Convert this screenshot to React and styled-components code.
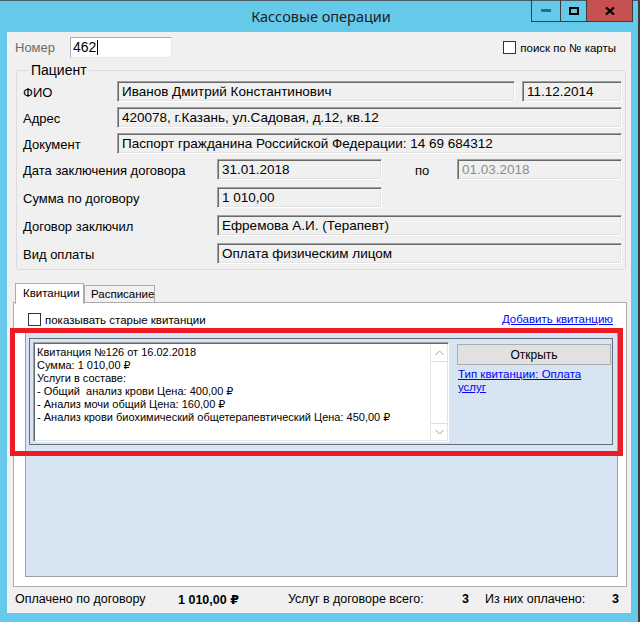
import React from 'react';
import styled, { createGlobalStyle } from 'styled-components';

const Global = createGlobalStyle`
  html, body { margin: 0; padding: 0; background: #fff; }
  body { font-family: "Liberation Sans", "DejaVu Sans", sans-serif; }
  * { box-sizing: border-box; }
`;

const Window = styled.div`
  position: relative;
  width: 640px;
  height: 622px;
  background: #65c9ea;
  border-top: 1px solid #4a5a60;
  border-right: 2px solid #3c3c3c;
  display: flex;
  flex-direction: column;
`;

const TitleBar = styled.div`
  height: 31px;
  display: grid;
  grid-template-columns: 1fr auto 1fr;
  align-items: start;
`;

const Title = styled.div`
  font-family: "Noto Sans", "Open Sans", sans-serif;
  font-size: 14.5px;
  color: #1e1e1e;
  line-height: 31px;
  padding-left: 4px;
`;

const Caption = styled.div`
  justify-self: end;
  margin-right: 5px;
  margin-top: -1px;
  display: flex;
  border: 1px solid #3c3c3c;
  border-top: none;
  height: 22px;
`;

const CapBtn = styled.div`
  width: ${p => p.$w}px;
  height: 100%;
  display: flex;
  align-items: center;
  justify-content: center;
  background: ${p => (p.$close ? '#c75050' : 'transparent')};
  border-left: ${p => (p.$first ? 'none' : '1px solid #3c3c3c')};
`;

const Body = styled.div`
  margin: 0 7px;
  height: 581px;
  background: #f0f0f0;
  display: flex;
  flex-direction: column;
  color: #000;
`;

const TopRow = styled.div`
  display: flex;
  align-items: center;
  padding: 5px 15px 0 8px;
  height: 26px;
`;

const GrayLabel = styled.span`
  width: 55px;
  font-size: 13px;
  color: #6d6d6d;
`;

const NumInput = styled.div`
  width: 102px;
  height: 21px;
  background: #fff;
  border: 1px solid #abadb3;
  border-right-color: #e3e9ef;
  border-bottom-color: #e3e9ef;
  font-size: 14px;
  line-height: 19px;
  padding-left: 2px;
  display: flex;
  align-items: center;
`;

const Caret = styled.span`
  width: 1px;
  height: 15px;
  background: #000;
  margin-left: 1px;
`;

const CheckRow = styled.label`
  display: flex;
  align-items: center;
  gap: 4px;
  font-size: 11.5px;
  margin-left: ${p => (p.$auto ? 'auto' : '0')};
`;

const Box = styled.span`
  width: 13px;
  height: 13px;
  background: #fff;
  border: 1px solid #333;
`;

const Group = styled.fieldset`
  margin: 4px 0 0 9px;
  width: 610px;
  padding: 3px 3px 5px 6px;
  border: 1px solid #dcdcdc;
  border-radius: 3px;
  min-width: 0;
`;

const Legend = styled.legend`
  font-size: 14px;
  line-height: 16px;
  padding: 0 2px;
  margin-left: 6px;
`;

const Row = styled.div`
  display: flex;
  align-items: center;
  height: 21px;
  margin-top: ${p => p.$mt || 0}px;
`;

const Label = styled.span`
  width: ${p => p.$w}px;
  flex: none;
  font-size: 13px;
  padding-top: 2px;
  margin-left: ${p => p.$ml || 0}px;
`;

const Field = styled.div`
  width: ${p => (p.$w ? `${p.$w}px` : 'auto')};
  flex: ${p => (p.$w ? 'none' : '1')};
  height: 21px;
  margin-left: ${p => p.$ml || 0}px;
  background: #f0f0f0;
  border-top: 1px solid #a0a0a0;
  border-left: 1px solid #a0a0a0;
  border-right: 1px solid #fff;
  border-bottom: 1px solid #fff;
  box-shadow: inset 1px 1px #696969, inset -1px -1px #e3e3e3;
  font-size: 13.5px;
  line-height: 19px;
  padding-left: 4px;
  white-space: nowrap;
  overflow: hidden;
  color: ${p => (p.$disabled ? '#8d8d8d' : '#000')};
`;

const Tabs = styled.div`
  margin: 13px 0 0 6px;
  width: 614px;
  display: flex;
  flex-direction: column;
`;

const TabStrip = styled.div`
  display: flex;
  align-items: flex-end;
  padding-left: 2px;
  height: 19px;
`;

const Tab = styled.div`
  position: relative;
  z-index: ${p => (p.$active ? 2 : 1)};
  width: ${p => p.$w}px;
  height: ${p => (p.$active ? 21 : 17)}px;
  margin-bottom: ${p => (p.$active ? -2 : 0)}px;
  background: ${p => (p.$active ? '#fff' : '#f0f0f0')};
  border: 1px solid #acacac;
  border-bottom: none;
  font-size: 11.5px;
  white-space: nowrap;
  padding: ${p => (p.$active ? '3px 0 0 7px' : '2px 0 0 6px')};
`;

const Page = styled.div`
  height: 285px;
  background: #fff;
  border: 1px solid #acacac;
  display: flex;
  flex-direction: column;
  padding: 10px 8px 9px 11px;
`;

const PageTop = styled.div`
  display: flex;
  align-items: center;
  justify-content: space-between;
  padding: 0 5px 0 3px;
  height: 13px;
`;

const Link = styled.a`
  color: #0000ff;
  text-decoration: underline;
  font-size: 11.5px;
  line-height: 13px;
  cursor: pointer;
`;

const Panel = styled.div`
  flex: 1;
  margin-top: 5px;
  background: #d7e4f2;
  border: 1px solid #a0a0a0;
  padding: 6px 4px 0 3px;
`;

const Card = styled.div`
  height: 107px;
  border: 1px solid #646e78;
  display: flex;
  padding: 3px 1px 2px 3px;
`;

const TextBox = styled.div`
  width: 416px;
  height: 100px;
  background: #fff;
  border-top: 1px solid #a0a0a0;
  border-left: 1px solid #a0a0a0;
  border-right: 1px solid #fff;
  border-bottom: 1px solid #fff;
  box-shadow: inset 1px 1px #696969, inset -1px -1px #e3e3e3;
  display: flex;
`;

const Lines = styled.div`
  flex: 1;
  padding: 3px 0 0 3px;
  font-size: 11px;
  line-height: 13px;
  white-space: pre;
  overflow: hidden;
`;

const Scroll = styled.div`
  width: 17px;
  margin: 2px 1px 1px 0;
  display: flex;
  flex-direction: column;
  justify-content: space-between;
  background: #fff;
  border-left: 1px solid #e6e6e6;
`;

const Arrow = styled.div`
  height: 17px;
  display: flex;
  align-items: center;
  justify-content: center;
  border-top: ${p => (p.$down ? '1px solid #e0e0e0' : 'none')};
  border-bottom: ${p => (p.$down ? 'none' : '1px solid #e0e0e0')};
`;

const Side = styled.div`
  margin-left: 8px;
  width: 154px;
  display: flex;
  flex-direction: column;
  padding-top: 2px;
`;

const Button = styled.div`
  height: 21px;
  background: #e1e1e1;
  border: 1px solid #adadad;
  font-size: 12px;
  display: flex;
  align-items: center;
  justify-content: center;
`;

const SideLink = styled(Link)`
  margin-top: 3px;
  padding-left: 1px;
  width: 130px;
`;

const Status = styled.div`
  height: 24px;
  display: grid;
  grid-template-columns: 163px 110px 174px 23px 127px 1fr;
  align-items: center;
  padding-left: 8px;
  font-size: 12.5px;
`;

const Strong = styled.span`
  font-weight: bold;
`;

const Marker = styled.div`
  position: absolute;
  left: 10px;
  top: 327px;
  width: 613px;
  height: 128px;
  border: 5px solid #ed1c24;
  pointer-events: none;
`;

const Chevron = ({ down }) => (
  <svg width="9" height="6" viewBox="0 0 9 6">
    <path d={down ? 'M0.5 1 L4.5 5 L8.5 1' : 'M0.5 5 L4.5 1 L8.5 5'} fill="none" stroke="#a0a0a0" strokeWidth="1" />
  </svg>
);

const receipt = [
  'Квитанция №126 от 16.02.2018',
  'Сумма: 1 010,00 ₽',
  'Услуги в составе:',
  '- Общий  анализ крови Цена: 400,00 ₽',
  '- Анализ мочи общий Цена: 160,00 ₽',
  '- Анализ крови биохимический общетерапевтический Цена: 450,00 ₽',
];

export default function App() {
  return (
    <>
      <Global />
      <Window>
        <TitleBar>
          <div />
          <Title>Кассовые операции</Title>
          <Caption>
            <CapBtn $w={28} $first>
              <svg width="10" height="3"><rect width="10" height="3" fill="#2c6b8a" /></svg>
            </CapBtn>
            <CapBtn $w={26}>
              <svg width="10" height="8"><rect x="1" y="1" width="8" height="6" fill="none" stroke="#000" strokeWidth="2" /></svg>
            </CapBtn>
            <CapBtn $w={46} $close>
              <svg width="10" height="8" viewBox="0 0 10 8">
                <path d="M1 0.5 L9 7.5 M9 0.5 L1 7.5" stroke="#000" strokeWidth="2.2" />
              </svg>
            </CapBtn>
          </Caption>
        </TitleBar>

        <Body>
          <TopRow>
            <GrayLabel>Номер</GrayLabel>
            <NumInput>462<Caret /></NumInput>
            <CheckRow $auto>
              <Box />
              поиск по № карты
            </CheckRow>
          </TopRow>

          <Group>
            <Legend>Пациент</Legend>
            <Row>
              <Label $w={94}>ФИО</Label>
              <Field $w={398}>Иванов Дмитрий Константинович</Field>
              <Field $w={100} $ml={7}>11.12.2014</Field>
            </Row>
            <Row $mt={5}>
              <Label $w={94}>Адрес</Label>
              <Field>420078, г.Казань, ул.Садовая, д.12, кв.12</Field>
            </Row>
            <Row $mt={5}>
              <Label $w={94}>Документ</Label>
              <Field>Паспорт гражданина Российской Федерации: 14 69 684312</Field>
            </Row>
            <Row $mt={5}>
              <Label $w={194}>Дата заключения договора</Label>
              <Field $w={165}>31.01.2018</Field>
              <Label $w={42} $ml={33}>по</Label>
              <Field $w={165} $disabled>01.03.2018</Field>
            </Row>
            <Row $mt={7}>
              <Label $w={194}>Сумма по договору</Label>
              <Field $w={165}>1 010,00</Field>
            </Row>
            <Row $mt={7}>
              <Label $w={194}>Договор заключил</Label>
              <Field>Ефремова А.И. (Терапевт)</Field>
            </Row>
            <Row $mt={7}>
              <Label $w={194}>Вид оплаты</Label>
              <Field>Оплата физическим лицом</Field>
            </Row>
          </Group>

          <Tabs>
            <TabStrip>
              <Tab $active $w={69}>Квитанции</Tab>
              <Tab $w={71}>Расписание</Tab>
            </TabStrip>
            <Page>
              <PageTop>
                <CheckRow>
                  <Box />
                  показывать старые квитанции
                </CheckRow>
                <Link>Добавить квитанцию</Link>
              </PageTop>
              <Panel>
                <Card>
                  <TextBox>
                    <Lines>{receipt.join('\n')}</Lines>
                    <Scroll>
                      <Arrow><Chevron /></Arrow>
                      <Arrow $down><Chevron down /></Arrow>
                    </Scroll>
                  </TextBox>
                  <Side>
                    <Button>Открыть</Button>
                    <SideLink>Тип квитанции: Оплата услуг</SideLink>
                  </Side>
                </Card>
              </Panel>
            </Page>
          </Tabs>

          <Status>
            <span>Оплачено по договору</span>
            <Strong>1 010,00 ₽</Strong>
            <span>Услуг в договоре всего:</span>
            <Strong>3</Strong>
            <span>Из них оплачено:</span>
            <Strong>3</Strong>
          </Status>
        </Body>
        <Marker />
      </Window>
    </>
  );
}
